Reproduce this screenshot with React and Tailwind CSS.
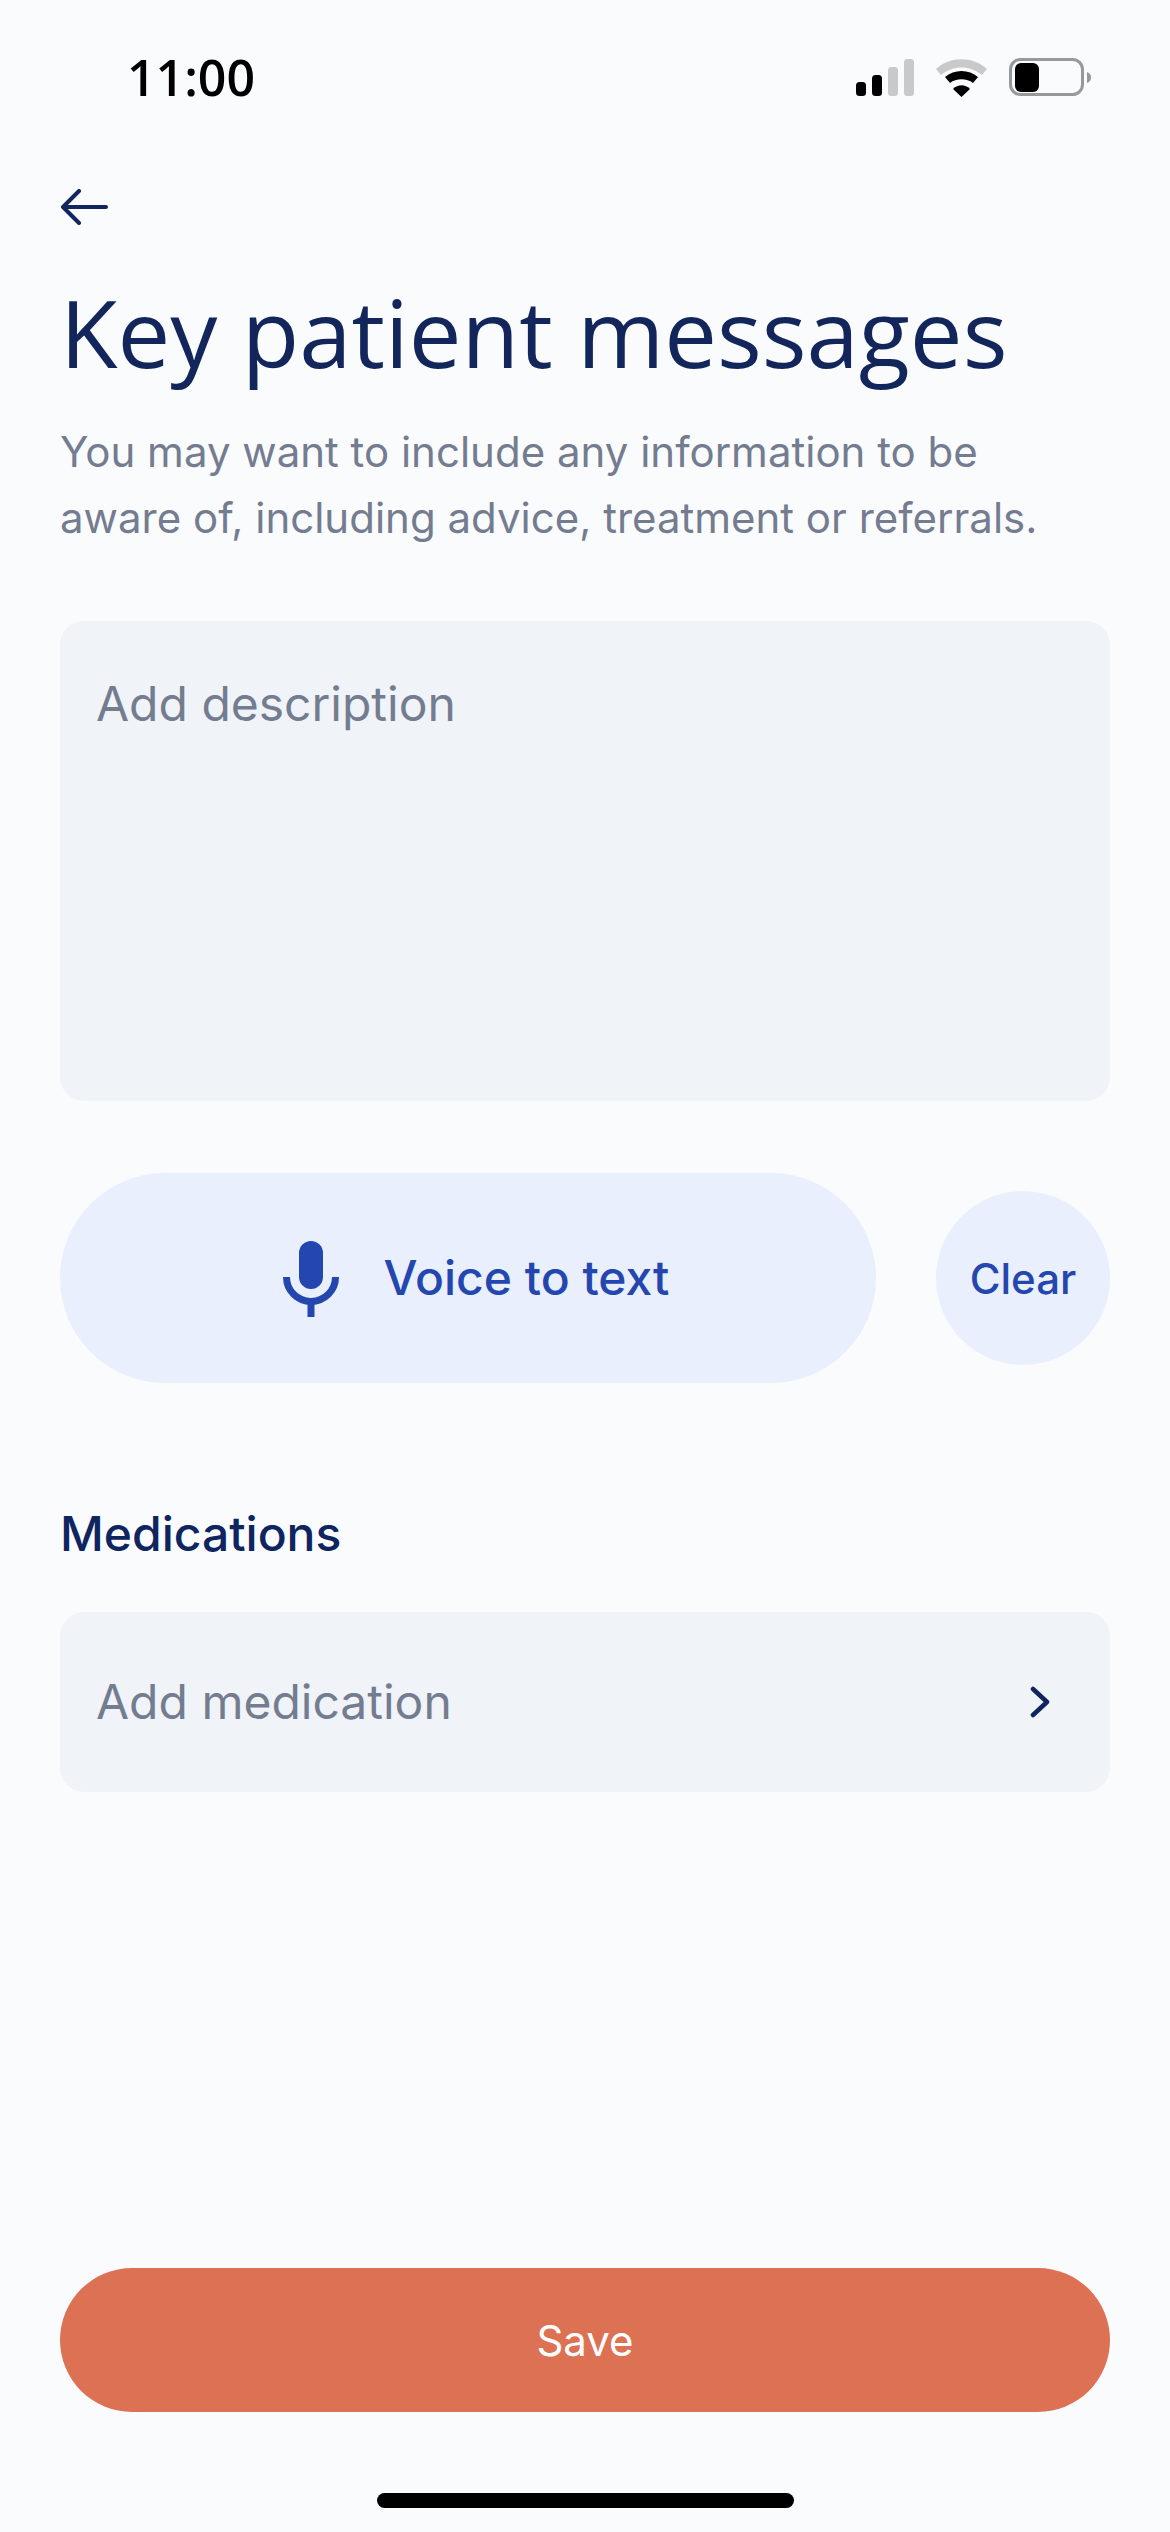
export default function App() {
  return (
    <div className="w-[1170px] h-[2532px] bg-[#fafbfd] flex flex-col px-[60px] font-['Inter',sans-serif] overflow-hidden">
      <div className="h-[154px] flex items-center justify-between shrink-0">
        <span className="ml-[67px] text-[50px] leading-[60px] font-semibold text-black font-['Open_Sans',sans-serif]">11:00</span>
        <svg className="mr-[18px]" width="236" height="40" viewBox="0 0 236 40">
          <rect x="0" y="25" width="10" height="14" rx="3.5" fill="#000" />
          <rect x="16" y="18" width="10" height="21" rx="3.5" fill="#000" />
          <rect x="32" y="10" width="10" height="29" rx="3.5" fill="#c8c9cb" />
          <rect x="48" y="2" width="10" height="37" rx="3.5" fill="#c8c9cb" />
          <path d="M80 12 L85 18 C97 8 114 8 126 18 L131 12 C117 -1 94 -1 80 12 Z" fill="#c8c9cb" />
          <path d="M89 20 L94 26 C100 21 111 21 117 26 L122 20 C113 12 98 12 89 20 Z" fill="#000" />
          <path d="M97 32 C102 27 109 27 114 32 L105.5 40 Z" fill="#000" />
          <rect x="154.5" y="2.5" width="72" height="35" rx="10" fill="none" stroke="#98999b" strokeWidth="3" />
          <rect x="159" y="6" width="24" height="29" rx="6" fill="#000" />
          <path d="M231 15 C234 16 235 18 235 20.5 C235 23 234 25 231 26 Z" fill="#98999b" />
        </svg>
      </div>
      <svg className="mt-[35px] shrink-0" width="48" height="36" viewBox="0 0 48 36" fill="none">
        <path d="M46 18 H3 M19 2 L3 18 L19 34" stroke="#11265e" strokeWidth="4" strokeLinecap="round" strokeLinejoin="round" />
      </svg>
      <h1 className="mt-[52px] text-[94px] leading-[110px] font-normal tracking-[0px] whitespace-nowrap text-[#12265b] font-['Open_Sans',sans-serif]">Key patient messages</h1>
      <p className="mt-[32px] text-[42px] leading-[66px] text-[#747c90]">
        You may want to include any information to be aware of, including advice, treatment or referrals.
      </p>
      <div className="mt-[70px] h-[480px] rounded-[24px] bg-[#f0f3f8] px-[36px] pt-[53px] text-[48px] leading-[60px] text-[#747c90] shrink-0">
        Add description
      </div>
      <div className="mt-[72px] flex items-center justify-between shrink-0">
        <button className="w-[816px] h-[210px] rounded-full bg-[#e9effc] pl-[16px] flex items-center justify-center gap-[45px] text-[48px] font-[450] text-[#2347ae]">
          <svg className="mt-[2px]" width="56" height="76" viewBox="0 0 56 76" fill="none">
            <rect x="16" y="0" width="24" height="48" rx="12" fill="#2347ae" />
            <path d="M3.5 36 A24.5 24.5 0 0 0 52.5 36" stroke="#2347ae" strokeWidth="7" />
            <path d="M28 60 V76" stroke="#2347ae" strokeWidth="7" />
          </svg>
          Voice to text
        </button>
        <button className="w-[174px] h-[174px] rounded-full bg-[#e9effc] text-[42px] font-[450] text-[#2347ae]">Clear</button>
      </div>
      <h2 className="mt-[123px] text-[48px] leading-[56px] font-medium text-[#0f2560]">Medications</h2>
      <div className="mt-[50px] h-[180px] rounded-[24px] bg-[#f0f3f8] pl-[36px] pr-[60px] flex items-center justify-between text-[48px] text-[#747c90] shrink-0">
        Add medication
        <svg width="20" height="32" viewBox="0 0 20 32" fill="none">
          <path d="M3 3 L17 16 L3 29" stroke="#11265e" strokeWidth="4.5" strokeLinecap="round" strokeLinejoin="round" />
        </svg>
      </div>
      <button className="mt-auto h-[144px] rounded-full bg-[#dd7153] text-white text-[42px] font-normal shrink-0">Save</button>
      <div className="mt-[81px] mb-[24px] mx-auto w-[417px] h-[15px] rounded-full bg-black shrink-0" />
    </div>
  );
}
